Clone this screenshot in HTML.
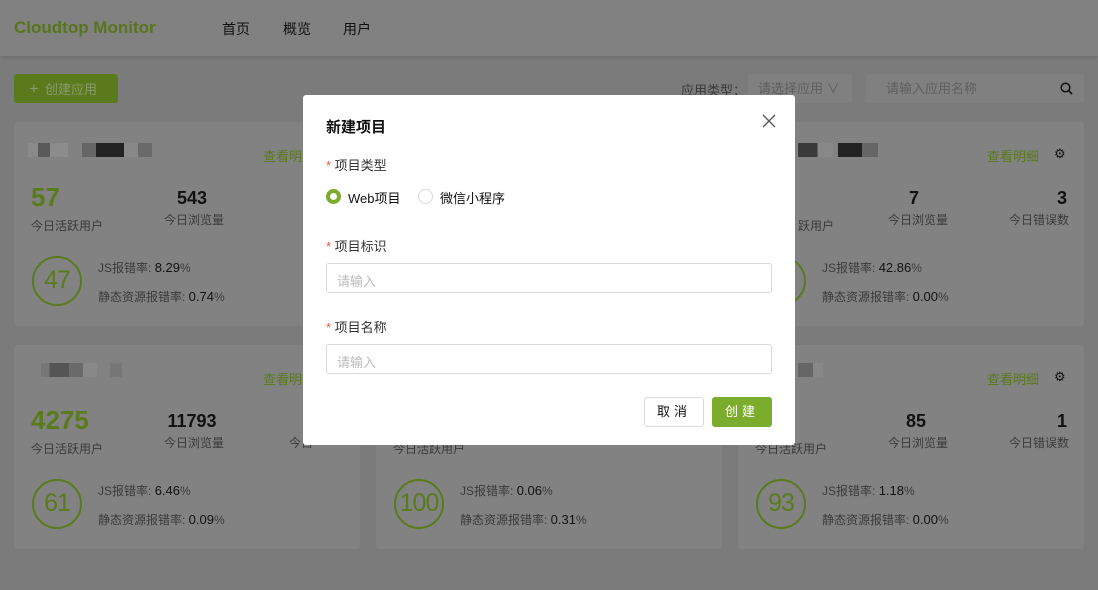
<!DOCTYPE html>
<html><head><meta charset="utf-8"><style>
*{margin:0;padding:0;box-sizing:border-box}
body{width:1098px;height:590px;overflow:hidden;background:#7b7b7b;font-family:"Liberation Sans","Noto Sans CJK SC",sans-serif;position:relative;color:#111}
.a{position:absolute;white-space:nowrap}
.hdr{position:absolute;left:0;top:0;width:1098px;height:56px;background:#818181;box-shadow:0 1px 4px rgba(0,0,0,.15)}
.card{position:absolute;width:346px;height:204px;background:#828282;border-radius:3px}
.g{color:#5a7a1c}
.lbl{font-size:12px;color:#3a3a3a}
.circ{position:absolute;width:50px;height:50px;border:2.5px solid #5a7a1c;border-radius:50%;color:#5a7a1c;font-size:25px;text-align:center;line-height:45px;letter-spacing:-1px}
.blk{position:absolute;height:14px}
.modal{position:absolute;left:303px;top:95px;width:492px;height:350px;background:#fff;border-radius:3px}
.inp{position:absolute;left:23px;width:446px;height:30px;border:1px solid #d9d9d9;border-radius:3px;font-size:13px;color:#bbb;padding:7px 10px}
.req{color:#e54}
</style></head><body>
<div class="hdr">
<div class="a g" style="left:14px;top:18px;font-size:17px;font-weight:bold;color:#57751b">Cloudtop Monitor</div>
<div class="a" style="left:222px;top:19px;font-size:14px">首页</div>
<div class="a" style="left:283px;top:19px;font-size:14px">概览</div>
<div class="a" style="left:343px;top:19px;font-size:14px">用户</div>
</div>
<div class="a" style="left:14px;top:74px;width:104px;height:29px;background:#5a7a1c;border-radius:3px;color:#8a9a70;font-size:13px;line-height:29px;padding-left:15px"><span style="font-size:17px;margin-right:6px">+</span>创建应用</div>
<div class="a lbl" style="left:681px;top:80px;font-size:13px">应用类型：</div>
<div class="a" style="left:748px;top:74px;width:104px;height:29px;background:#808080;border-radius:3px;font-size:13px;color:#5e5e5e;line-height:29px;padding-left:10px">请选择应用 ∨</div>
<div class="a" style="left:866px;top:74px;width:218px;height:29px;background:#808080;border-radius:3px;font-size:13px;color:#5e5e5e;line-height:29px;padding-left:20px">请输入应用名称
<svg style="position:absolute;right:11px;top:8px" width="13" height="13" viewBox="0 0 13 13"><circle cx="5.5" cy="5.5" r="4.3" fill="none" stroke="#111" stroke-width="1.5"/><path d="M8.6 8.6L12 12" stroke="#111" stroke-width="1.6"/></svg></div>

<!-- cards -->
<div class="card" style="left:14px;top:122px">
<div class="blk" style="left:14px;top:21px;width:40px;background:linear-gradient(90deg,#8a8a8a 0 25%,#5a5a5a 25% 55%,#8c8c8c 55%)"></div>
<div class="blk" style="left:68px;top:21px;width:70px;background:linear-gradient(90deg,#666 0 20%,#222 20% 60%,#888 60% 80%,#6a6a6a 80%)"></div>
<div class="a g" style="left:249px;top:24px;font-size:13px">查看明</div>
<div class="a g" style="left:17px;top:60px;font-size:26px;font-weight:bold">57</div>
<div class="a lbl" style="left:17px;top:95px">今日活跃用户</div>
<div class="a" style="left:150px;top:66px;width:56px;text-align:center;font-size:18px;font-weight:bold">543</div>
<div class="a lbl" style="left:150px;top:89px">今日浏览量</div>
<div class="circ" style="left:18px;top:134px">47</div>
<div class="a lbl" style="left:84px;top:137px">JS报错率: <span style="color:#111;font-size:13px">8.29</span>%</div>
<div class="a lbl" style="left:84px;top:166px">静态资源报错率: <span style="color:#111;font-size:13px">0.74</span>%</div>
</div>

<div class="card" style="left:738px;top:122px">
<div class="blk" style="left:60px;top:21px;width:35px;background:linear-gradient(90deg,#3a3a3a 0 55%,#888 55%)"></div>
<div class="blk" style="left:100px;top:21px;width:40px;background:linear-gradient(90deg,#222 0 60%,#666 60%)"></div>
<div class="a g" style="left:249px;top:24px;font-size:13px">查看明细</div>
<div class="a" style="left:316px;top:24px;font-size:13px">⚙</div>
<div class="a" style="left:171px;top:66px;font-size:18px;font-weight:bold">7</div>
<div class="a lbl" style="left:150px;top:89px">今日浏览量</div>
<div class="a" style="left:291px;top:66px;font-size:18px;font-weight:bold;width:38px;text-align:right">3</div>
<div class="a lbl" style="left:271px;top:89px">今日错误数</div>
<div class="a lbl" style="left:60px;top:95px">跃用户</div>
<div class="circ" style="left:18px;top:134px"></div>
<div class="a lbl" style="left:84px;top:137px">JS报错率: <span style="color:#111;font-size:13px">42.86</span>%</div>
<div class="a lbl" style="left:84px;top:166px">静态资源报错率: <span style="color:#111;font-size:13px">0.00</span>%</div>
</div>

<div class="card" style="left:14px;top:345px">
<div class="blk" style="left:27px;top:18px;width:56px;background:linear-gradient(90deg,#777 0 15%,#555 15% 50%,#6a6a6a 50% 75%,#888 75%)"></div>
<div class="blk" style="left:96px;top:18px;width:12px;background:#777"></div>
<div class="a g" style="left:249px;top:24px;font-size:13px">查看明</div>
<div class="a g" style="left:17px;top:60px;font-size:26px;font-weight:bold">4275</div>
<div class="a lbl" style="left:17px;top:95px">今日活跃用户</div>
<div class="a" style="left:150px;top:66px;width:56px;text-align:center;font-size:18px;font-weight:bold">11793</div>
<div class="a lbl" style="left:150px;top:89px">今日浏览量</div>
<div class="a lbl" style="left:275px;top:89px">今日</div>
<div class="circ" style="left:18px;top:134px">61</div>
<div class="a lbl" style="left:84px;top:137px">JS报错率: <span style="color:#111;font-size:13px">6.46</span>%</div>
<div class="a lbl" style="left:84px;top:166px">静态资源报错率: <span style="color:#111;font-size:13px">0.09</span>%</div>
</div>

<div class="card" style="left:376px;top:345px">
<div class="a lbl" style="left:17px;top:95px">今日活跃用户</div>
<div class="circ" style="left:18px;top:134px">100</div>
<div class="a lbl" style="left:84px;top:137px">JS报错率: <span style="color:#111;font-size:13px">0.06</span>%</div>
<div class="a lbl" style="left:84px;top:166px">静态资源报错率: <span style="color:#111;font-size:13px">0.31</span>%</div>
</div>

<div class="card" style="left:738px;top:345px">
<div class="blk" style="left:60px;top:18px;width:25px;background:linear-gradient(90deg,#666 0 60%,#888 60%)"></div>
<div class="a g" style="left:249px;top:24px;font-size:13px">查看明细</div>
<div class="a" style="left:316px;top:24px;font-size:13px">⚙</div>
<div class="a lbl" style="left:17px;top:95px">今日活跃用户</div>
<div class="a" style="left:150px;top:66px;width:56px;text-align:center;font-size:18px;font-weight:bold">85</div>
<div class="a lbl" style="left:150px;top:89px">今日浏览量</div>
<div class="a" style="left:291px;top:66px;font-size:18px;font-weight:bold;width:38px;text-align:right">1</div>
<div class="a lbl" style="left:271px;top:89px">今日错误数</div>
<div class="circ" style="left:18px;top:134px">93</div>
<div class="a lbl" style="left:84px;top:137px">JS报错率: <span style="color:#111;font-size:13px">1.18</span>%</div>
<div class="a lbl" style="left:84px;top:166px">静态资源报错率: <span style="color:#111;font-size:13px">0.00</span>%</div>
</div>

<div class="modal">
<div class="a" style="left:23px;top:21px;font-size:15px;font-weight:bold">新建项目</div>
<svg style="position:absolute;left:459px;top:19px" width="14" height="14" viewBox="0 0 14 14"><path d="M1 1L13 13M13 1L1 13" stroke="#555" stroke-width="1.3"/></svg>
<div class="a" style="left:23px;top:60px;font-size:13px;color:#333"><span class="req">* </span>项目类型</div>
<div class="a" style="left:23px;top:94px;width:15px;height:15px;border-radius:50%;border:4.5px solid #7cac2c"></div>
<div class="a" style="left:45px;top:93px;font-size:13px">Web项目</div>
<div class="a" style="left:115px;top:94px;width:15px;height:15px;border-radius:50%;border:1px solid #d9d9d9"></div>
<div class="a" style="left:137px;top:93px;font-size:13px">微信小程序</div>
<div class="a" style="left:23px;top:141px;font-size:13px;color:#333"><span class="req">* </span>项目标识</div>
<div class="inp" style="top:168px">请输入</div>
<div class="a" style="left:23px;top:222px;font-size:13px;color:#333"><span class="req">* </span>项目名称</div>
<div class="inp" style="top:249px">请输入</div>
<div class="a" style="left:341px;top:302px;width:60px;height:30px;border:1px solid #d9d9d9;border-radius:3px;text-align:center;line-height:28px;font-size:13px;letter-spacing:4px">取消</div>
<div class="a" style="left:409px;top:302px;width:60px;height:30px;background:#7cac2c;border-radius:3px;text-align:center;line-height:30px;font-size:13px;color:#fff;letter-spacing:4px">创建</div>
</div>
</body></html>
